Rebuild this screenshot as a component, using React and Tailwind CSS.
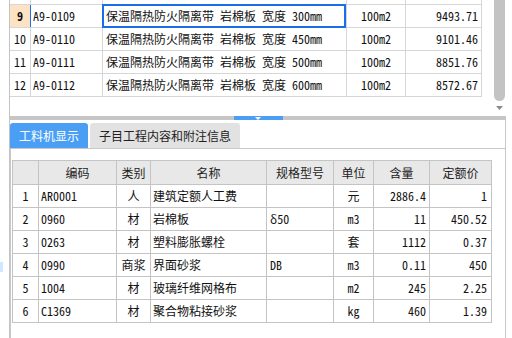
const TOP = [
  { n: "9", code: "A9-0109", w: "300mm", price: "9493.71", sel: true },
  { n: "10", code: "A9-0110", w: "450mm", price: "9101.46" },
  { n: "11", code: "A9-0111", w: "500mm", price: "8851.76" },
  { n: "12", code: "A9-0112", w: "600mm", price: "8572.67" },
];

const BOTTOM = [
  ["1", "AR0001", "人", "建筑定额人工费", "", "元", "2886.4", "1"],
  ["2", "0960", "材", "岩棉板", "δ50", "m3", "11", "450.52"],
  ["3", "0263", "材", "塑料膨胀螺栓", "", "套", "1112", "0.37"],
  ["4", "0990", "商浆", "界面砂浆", "DB", "m3", "0.11", "450"],
  ["5", "1004", "材", "玻璃纤维网格布", "", "m2", "245", "2.25"],
  ["6", "C1369", "材", "聚合物粘接砂浆", "", "kg", "460", "1.39"],
];

function TopRow({ r }) {
  return (
    <div className="flex h-[23px] border-b border-[#d6d6d6]">
      <div
        className={
          "w-[21px] shrink-0 border-r flex items-center justify-center " +
          (r && r.sel
            ? "bg-[#fde3c3] border-[#1a6fe8] font-bold"
            : "border-[#d6d6d6]")
        }
      >
        {r ? r.n : ""}
      </div>
      <div className="w-[72px] shrink-0 border-r border-[#d6d6d6] flex items-center pl-[2px]">
        {r ? r.code : ""}
      </div>
      <div className="w-[244px] shrink-0 border-r border-[#d6d6d6] flex items-center pl-[3px] relative whitespace-pre">
        {r ? `保温隔热防火隔离带 岩棉板 宽度 ${r.w}` : ""}
        {r && r.sel ? (
          <div className="absolute -left-px -top-px right-0 -bottom-px border-2 border-[#1a6fe8]" />
        ) : null}
      </div>
      <div className="w-[59px] shrink-0 border-r border-[#d6d6d6] flex items-center justify-center">
        {r ? "100m2" : ""}
      </div>
      <div className="w-[76px] shrink-0 border-r border-[#d6d6d6] flex items-center justify-end pr-[3px]">
        {r ? r.price : ""}
      </div>
    </div>
  );
}

const COLS = [
  { w: "w-[26px]", a: "justify-center" },
  { w: "w-[78px]", a: "justify-start pl-[2px]" },
  { w: "w-[34px]", a: "justify-center" },
  { w: "w-[116px]", a: "justify-start pl-[2px]" },
  { w: "w-[67px]", a: "justify-start pl-[3px]" },
  { w: "w-[40px]", a: "justify-center" },
  { w: "w-[56px]", a: "justify-end pr-[3px]" },
  { w: "w-[62px]", a: "justify-end pr-[4px]" },
];

const HEAD = ["", "编码", "类别", "名称", "规格型号", "单位", "含量", "定额价"];

export default function App() {
  return (
    <div className="flex w-[512px] h-[338px] overflow-hidden bg-white text-[12px] leading-none text-[#111] font-[family-name:'Noto_Sans_Mono_CJK_SC','Noto_Sans_CJK_SC',monospace]">
      <div className="w-[9px] shrink-0 flex flex-col">
        <div className="h-[262px]" />
        <div className="h-[10px] w-[3px] bg-[#cfe8ff]" />
      </div>
      <div className="w-[497px] shrink-0 flex flex-col border-l border-[#c4c4c4]">
        {/* top grid */}
        <div className="h-[116px] shrink-0 flex overflow-hidden">
          <div className="flex-1 overflow-hidden">
            <div className="-mt-[18px] w-[472px]">
              <TopRow r={null} />
              {TOP.map((r) => (
                <TopRow key={r.n} r={r} />
              ))}
            </div>
          </div>
          <div className="w-[11px] mr-px shrink-0 flex flex-col items-center">
            <div className="w-[11px] h-[101px] bg-[#c3c3c3] rounded-b-[6px]" />
            <svg width="7" height="4" viewBox="0 0 7 4" className="mt-[5px]">
              <path d="M0 0H7L3.5 4Z" fill="#8c8c8c" />
            </svg>
          </div>
        </div>
        {/* splitter */}
        <div className="h-[4px] shrink-0 flex justify-center bg-[#c6c6c6]">
          <div className="w-[49px] bg-[#4a9ff5] flex justify-center items-center">
            <svg width="6" height="3" viewBox="0 0 6 3">
              <path d="M0 0H6L3 3Z" fill="#ffffff" />
            </svg>
          </div>
        </div>
        {/* bottom */}
        <div className="flex-1 flex flex-col border-r border-[#c8c8c8]">
          <div className="pt-[3px] flex gap-[2px] border-b border-[#c8c8c8] font-[family-name:'Noto_Sans_CJK_SC',sans-serif]">
            <div className="w-[78px] h-[25px] rounded-t-[3px] bg-[#4a9ff5] text-white flex items-center justify-center">
              工料机显示
            </div>
            <div className="w-[150px] h-[25px] rounded-t-[3px] bg-[#e2e2e2] text-[#222] flex items-center justify-center">
              子目工程内容和附注信息
            </div>
          </div>
          <div className="flex-1 border-l border-[#c8c8c8] pt-[11px] pl-px">
            <div className="w-[480px] border-l border-t border-[#c4c4c4]">
              <div className="flex h-[24px] border-b border-[#c4c4c4] bg-[#e8e8e8] text-[#222] font-[family-name:'Noto_Sans_CJK_SC',sans-serif]">
                {HEAD.map((h, i) => (
                  <div
                    key={i}
                    className={COLS[i].w + " shrink-0 border-r border-[#c4c4c4] flex items-center justify-center"}
                  >
                    {h}
                  </div>
                ))}
              </div>
              {BOTTOM.map((row) => (
                <div key={row[0]} className="flex h-[23px] border-b border-[#c4c4c4]">
                  {row.map((c, i) => (
                    <div
                      key={i}
                      className={COLS[i].w + " " + COLS[i].a + " shrink-0 border-r border-[#c4c4c4] flex items-center whitespace-pre"}
                    >
                      {c}
                    </div>
                  ))}
                </div>
              ))}
            </div>
          </div>
        </div>
      </div>
    </div>
  );
}
